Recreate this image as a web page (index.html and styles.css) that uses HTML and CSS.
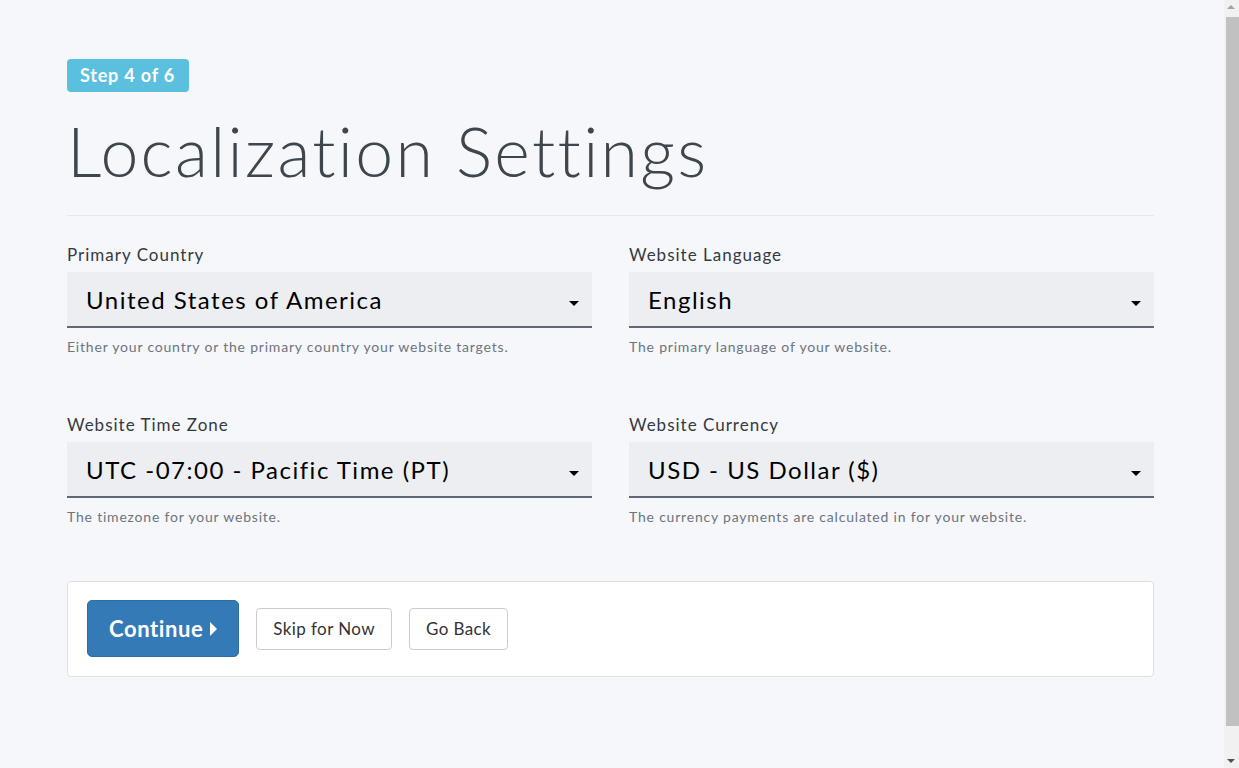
FILE: index.html
```html
<!DOCTYPE html>
<html>
<head>
    <meta charset="utf-8">
    <meta name="viewport" content="width=device-width, initial-scale=1">
    <title>Localization Settings</title>
    <link rel="stylesheet" href="styles.css">
</head>
<body>
    <div class="container">
        <span class="step-badge">Step 4 of 6</span>
        <h1 class="page-title">Localization Settings</h1>
        <hr class="divider">

        <form class="settings-form">
            <div class="field">
                <label class="field-label">Primary Country</label>
                <div class="select-box">
                    <span class="select-value">United States of America</span>
                    <span class="caret"></span>
                </div>
                <div class="help-text">Either your country or the primary country your website targets.</div>
            </div>
            <div class="field">
                <label class="field-label">Website Language</label>
                <div class="select-box">
                    <span class="select-value">English</span>
                    <span class="caret"></span>
                </div>
                <div class="help-text">The primary language of your website.</div>
            </div>
            <div class="field">
                <label class="field-label">Website Time Zone</label>
                <div class="select-box">
                    <span class="select-value">UTC -07:00 - Pacific Time (PT)</span>
                    <span class="caret"></span>
                </div>
                <div class="help-text">The timezone for your website.</div>
            </div>
            <div class="field">
                <label class="field-label">Website Currency</label>
                <div class="select-box">
                    <span class="select-value">USD - US Dollar ($)</span>
                    <span class="caret"></span>
                </div>
                <div class="help-text">The currency payments are calculated in for your website.</div>
            </div>
        </form>

        <div class="action-card">
            <button class="btn btn-primary" type="button">Continue <span class="caret-right"></span></button>
            <button class="btn btn-default" type="button">Skip for Now</button>
            <button class="btn btn-default" type="button">Go Back</button>
        </div>
    </div>

    <!-- window scrollbar, drawn since the headless browser hides it -->
    <div class="scrollbar">
        <span class="scroll-arrow up"></span>
        <div class="scroll-thumb"></div>
        <span class="scroll-arrow down"></span>
    </div>
</body>
</html>
```

FILE: styles.css
```css
html, body {
    margin: 0;
    padding: 0;
}

body {
    background: #f6f7fb;
    font-family: "Lato", "Open Sans", sans-serif;
    color: #343a40;
    min-height: 768px;
    padding-right: 16px;
}

.container {
    width: 1087px;
    margin: 0 auto;
    padding-top: 59px;
    position: relative;
    left: -1px;
}

.step-badge {
    display: inline-block;
    background: #5bc0de;
    color: #fff;
    font-weight: 700;
    font-size: 18px;
    line-height: 33px;
    height: 33px;
    padding: 0 14px 0 13px;
    letter-spacing: 0.8px;
    border-radius: 4px;
}

.page-title {
    margin: 18px 0 0;
    font-size: 68px;
    font-weight: 300;
    line-height: 82px;
    color: #3e454c;
    letter-spacing: 2.3px;
}

.divider {
    border: 0;
    border-top: 1px solid #e6e8ec;
    margin: 23px 0 0;
}

.settings-form {
    display: grid;
    grid-template-columns: 1fr 1fr;
    column-gap: 37px;
    row-gap: 57px;
    padding-top: 28px;
}

.field-label {
    display: block;
    font-size: 17px;
    line-height: 22px;
    letter-spacing: 1px;
    color: #343a40;
    margin-bottom: 6px;
}

.select-box {
    display: flex;
    align-items: center;
    justify-content: space-between;
    height: 54px;
    background: #eceef2;
    border-bottom: 2px solid #5f6874;
    padding: 0 13px 0 19px;
}

.select-value {
    font-size: 24px;
    letter-spacing: 1.5px;
    color: #000;
}

.caret {
    width: 0;
    height: 0;
    border-left: 5px solid transparent;
    border-right: 5px solid transparent;
    border-top: 5px solid #000;
    margin-top: 8px;
}

.help-text {
    margin-top: 9px;
    font-size: 14px;
    line-height: 20px;
    letter-spacing: 0.8px;
    color: #6c757d;
}

.action-card {
    margin-top: 54px;
    background: #fff;
    border: 1px solid #dcdfe3;
    border-radius: 4px;
    padding: 18px 19px 19px;
    display: flex;
    align-items: center;
    gap: 17px;
}

.btn {
    font-family: inherit;
    cursor: pointer;
    border-radius: 4px;
}

.btn-primary {
    background: #337ab7;
    border: 1px solid #2e6da4;
    color: #fff;
    font-size: 22px;
    font-weight: 700;
    letter-spacing: 0.6px;
    height: 57px;
    padding: 0 21px;
    border-radius: 5px;
    display: flex;
    align-items: center;
    gap: 7px;
}

.caret-right {
    width: 0;
    height: 0;
    border-top: 7px solid transparent;
    border-bottom: 7px solid transparent;
    border-left: 7px solid #fff;
}

.btn-default {
    background: #fff;
    border: 1px solid #ccc;
    color: #333;
    font-size: 17px;
    letter-spacing: 0.4px;
    height: 42px;
    padding: 0 16px;
}

.scrollbar {
    position: fixed;
    top: 0;
    right: 0;
    width: 15px;
    height: 100%;
    background: #f1f1f1;
}

.scroll-thumb {
    position: absolute;
    top: 17px;
    bottom: 42px;
    left: 2px;
    right: 0;
    background: #c1c1c1;
}

.scroll-arrow {
    position: absolute;
    left: 3px;
    width: 0;
    height: 0;
    border-left: 4px solid transparent;
    border-right: 4px solid transparent;
}

.scroll-arrow.up {
    top: 5px;
    border-bottom: 4px solid #a3a3a3;
}

.scroll-arrow.down {
    bottom: 5px;
    border-top: 4px solid #505050;
}
```
